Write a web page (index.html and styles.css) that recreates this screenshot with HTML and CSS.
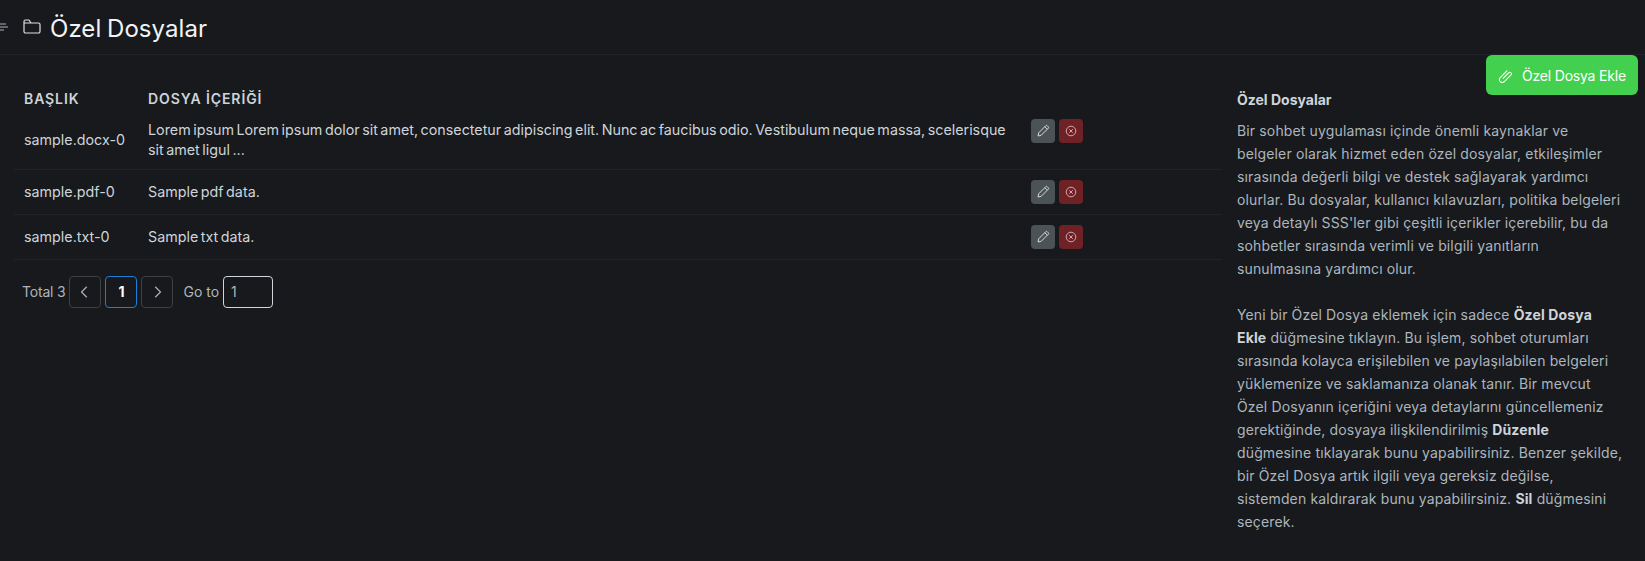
FILE: index.html
```html
<!DOCTYPE html>
<html lang="tr">
<head>
    <meta charset="UTF-8">
    <meta name="viewport" content="width=device-width, initial-scale=1.0">
    <title>Özel Dosyalar</title>
    <link rel="stylesheet" href="styles.css">
</head>
<body>
    <!-- Page header -->
    <header class="page-header">
        <svg class="menu-icon" viewBox="0 0 10 8" fill="none" stroke="currentColor" stroke-width="1" aria-hidden="true">
            <path d="M0 1h8M0 4h10M0 7h6"/>
        </svg>
        <svg class="folder-icon" viewBox="0 0 18 16" fill="none" stroke="currentColor" stroke-width="1.2" stroke-linejoin="round" aria-hidden="true">
            <path d="M1 4V2.500A1.500 1.500 0 0 1 2.500 1H6l2 3h7.500A1.500 1.500 0 0 1 17 5.500v7a1.500 1.500 0 0 1-1.500 1.500h-13A1.500 1.500 0 0 1 1 12.500V4h7"/>
        </svg>
        <h1>Özel Dosyalar</h1>
    </header>

    <button class="add-btn">
        <svg viewBox="0 0 16 16" fill="none" stroke="currentColor" stroke-width="1.1" stroke-linecap="round" aria-hidden="true">
            <path d="M5.500 11l6-6a1.700 1.700 0 0 1 2.400 2.400l-7.200 7.200a3 3 0 0 1-4.300-4.300L9.500 3"/>
        </svg>
        Özel Dosya Ekle
    </button>

    <main class="content">
        <section class="files">
            <table class="files-table">
                <thead>
                    <tr>
                        <th class="col-title">BAŞLIK</th>
                        <th class="col-body">DOSYA İÇERİĞİ</th>
                        <th class="col-actions"></th>
                    </tr>
                </thead>
                <tbody>
                    <tr class="row-tall">
                        <td>sample.docx-0</td>
                        <td>Lorem ipsum Lorem ipsum dolor sit amet, consectetur adipiscing elit. Nunc ac faucibus odio. Vestibulum neque massa, scelerisque sit amet ligul ...</td>
                        <td class="actions">
                            <button class="icon-btn edit"><svg viewBox="0 0 16 16" fill="none" stroke="currentColor" stroke-linejoin="round"><path d="M3 13l.7-3.200L10.800 2.700a1 1 0 0 1 1.400 0l1.100 1.100a1 1 0 0 1 0 1.400L6.200 12.300 3 13zM9.800 3.700l2.500 2.500"/></svg></button>
                            <button class="icon-btn delete"><svg viewBox="0 0 16 16" fill="none" stroke="currentColor"><circle cx="8" cy="8" r="4.800"/><path d="M6.300 6.300l3.400 3.400M9.700 6.300l-3.400 3.400"/></svg></button>
                        </td>
                    </tr>
                    <tr>
                        <td>sample.pdf-0</td>
                        <td>Sample pdf data.</td>
                        <td class="actions">
                            <button class="icon-btn edit"><svg viewBox="0 0 16 16" fill="none" stroke="currentColor" stroke-linejoin="round"><path d="M3 13l.7-3.200L10.800 2.700a1 1 0 0 1 1.400 0l1.100 1.100a1 1 0 0 1 0 1.400L6.200 12.300 3 13zM9.800 3.700l2.500 2.500"/></svg></button>
                            <button class="icon-btn delete"><svg viewBox="0 0 16 16" fill="none" stroke="currentColor"><circle cx="8" cy="8" r="4.800"/><path d="M6.300 6.300l3.400 3.400M9.700 6.300l-3.400 3.400"/></svg></button>
                        </td>
                    </tr>
                    <tr>
                        <td>sample.txt-0</td>
                        <td>Sample txt data.</td>
                        <td class="actions">
                            <button class="icon-btn edit"><svg viewBox="0 0 16 16" fill="none" stroke="currentColor" stroke-linejoin="round"><path d="M3 13l.7-3.200L10.800 2.700a1 1 0 0 1 1.400 0l1.100 1.100a1 1 0 0 1 0 1.400L6.200 12.300 3 13zM9.800 3.700l2.500 2.500"/></svg></button>
                            <button class="icon-btn delete"><svg viewBox="0 0 16 16" fill="none" stroke="currentColor"><circle cx="8" cy="8" r="4.800"/><path d="M6.300 6.300l3.400 3.400M9.700 6.300l-3.400 3.400"/></svg></button>
                        </td>
                    </tr>
                </tbody>
            </table>

            <!-- Pagination -->
            <div class="pager">
                <span>Total 3</span>
                <button class="page-btn"><svg viewBox="0 0 12 12" fill="none" stroke="currentColor" stroke-width="1"><path d="M7.500 1.500L3 6l4.500 4.500"/></svg></button>
                <button class="page-btn current">1</button>
                <button class="page-btn"><svg viewBox="0 0 12 12" fill="none" stroke="currentColor" stroke-width="1"><path d="M4.500 1.500L9 6l-4.500 4.500"/></svg></button>
                <span class="goto">Go to</span>
                <input class="page-input" type="text" value="1">
            </div>
        </section>

        <!-- Help text -->
        <aside class="help">
            <h2>Özel Dosyalar</h2>
            <p>Bir sohbet uygulaması içinde önemli kaynaklar ve belgeler olarak hizmet eden özel dosyalar, etkileşimler sırasında değerli bilgi ve destek sağlayarak yardımcı olurlar. Bu dosyalar, kullanıcı kılavuzları, politika belgeleri veya detaylı SSS'ler gibi çeşitli içerikler içerebilir, bu da sohbetler sırasında verimli ve bilgili yanıtların sunulmasına yardımcı olur.</p>
            <p>Yeni bir Özel Dosya eklemek için sadece <b>Özel Dosya Ekle</b> düğmesine tıklayın. Bu işlem, sohbet oturumları sırasında kolayca erişilebilen ve paylaşılabilen belgeleri yüklemenize ve saklamanıza olanak tanır. Bir mevcut Özel Dosyanın içeriğini veya detaylarını güncellemeniz gerektiğinde, dosyaya ilişkilendirilmiş <b>Düzenle</b> düğmesine tıklayarak bunu yapabilirsiniz. Benzer şekilde, bir Özel Dosya artık ilgili veya gereksiz değilse, sistemden kaldırarak bunu yapabilirsiniz. <b>Sil</b> düğmesini seçerek.</p>
        </aside>
    </main>
</body>
</html>
```

FILE: styles.css
```css
/* General Styling */
body {
    margin: 0;
    height: 561px;
    overflow: hidden;
    position: relative;
    font-family: Inter, "Liberation Sans", sans-serif;
    background-color: #17191c;
    color: #ced4da;
}

/* Page Header */
.page-header {
    display: flex;
    align-items: center;
    height: 54px;
    border-bottom: 1px solid #212327;
    color: #f1f3f5;
}

.menu-icon {
    width: 10px;
    height: 8px;
    margin-left: -2px;
    color: #adb5bd;
}

.folder-icon {
    width: 18px;
    height: 16px;
    margin-left: 15px;
    color: #dee2e6;
}

.page-header h1 {
    margin: 2px 0 0 9px;
    font-size: 24px;
    font-weight: 400;
    letter-spacing: 0.05px;
    word-spacing: -1px;
}

/* Add Button */
.add-btn {
    position: absolute;
    top: 55px;
    left: 1486px;
    display: flex;
    align-items: center;
    gap: 9px;
    width: 152px;
    height: 40px;
    padding: 0 0 0 12px;
    border: none;
    border-radius: 6px;
    background-color: #44d04f;
    color: white;
    font-family: inherit;
    font-size: 14px;
    letter-spacing: -0.2px;
    white-space: nowrap;
}

.add-btn svg {
    width: 15px;
    height: 15px;
}

/* Layout */
.content {
    display: flex;
    align-items: flex-start;
}

.files {
    width: 1222px;
    padding: 26px 0 0 14px;
    box-sizing: border-box;
}

/* Table */
.files-table {
    width: 100%;
    border-collapse: collapse;
    font-size: 14.3px;
    word-spacing: -1.5px;
}

.files-table th {
    height: 34px;
    padding: 0 10px;
    text-align: left;
    font-size: 14px;
    font-weight: 600;
    letter-spacing: 0.9px;
    word-spacing: 0;
    color: #ced4da;
}

.col-title {
    width: 104px;
}

.col-body {
    width: 860px;
}

.files-table td {
    height: 45px;
    padding: 1px 10px 0;
    box-sizing: border-box;
    border-bottom: 1px solid #212327;
    line-height: 20px;
}

.row-tall td {
    height: 54px;
    padding: 0 10px 4px;
}

.files-table td.actions {
    padding: 10px 0 0 13px;
    vertical-align: top;
    white-space: nowrap;
}

.row-tall td.actions {
    padding-top: 4px;
}

.icon-btn {
    width: 24px;
    height: 24px;
    padding: 4px;
    border: none;
    border-radius: 4px;
    vertical-align: top;
}

.icon-btn svg {
    display: block;
    width: 16px;
    height: 16px;
}

.edit {
    background-color: #4b5357;
    color: #d5d9db;
}

.delete {
    margin-left: 1px;
    background-color: #6f2226;
    color: #d9a5a7;
}

/* Pagination */
.pager {
    display: flex;
    align-items: center;
    gap: 4px;
    height: 32px;
    margin: 16px 0 0 8px;
    font-size: 14px;
    letter-spacing: -0.2px;
    color: #adb5bd;
}

.page-btn {
    width: 32px;
    height: 32px;
    padding: 0;
    border: 1px solid #3d4045;
    border-radius: 4px;
    background: none;
    color: #adb5bd;
    font-family: inherit;
    font-size: 14px;
    font-weight: 700;
}

.page-btn svg {
    display: block;
    width: 14px;
    height: 14px;
    margin: auto;
}

.current {
    border-color: #1c7ed6;
    color: white;
}

.goto {
    margin-left: 6px;
    letter-spacing: 0;
}

.page-input {
    width: 50px;
    height: 32px;
    padding: 0 7px;
    box-sizing: border-box;
    border: 1px solid #ced4da;
    border-radius: 4px;
    background: none;
    color: #adb5bd;
    font-family: inherit;
    font-size: 14px;
}

/* Help Box */
.help {
    width: 386px;
    padding: 33px 0 0 15px;
    font-size: 14px;
    letter-spacing: 0.14px;
    line-height: 23px;
    color: #adb5bd;
}

.help h2 {
    margin: 0 0 8px;
    font-size: 14px;
    font-weight: 700;
    letter-spacing: 0;
    color: #ced4da;
}

.help p {
    margin: 0 0 23px;
}

.help b {
    color: #ced4da;
}
```
